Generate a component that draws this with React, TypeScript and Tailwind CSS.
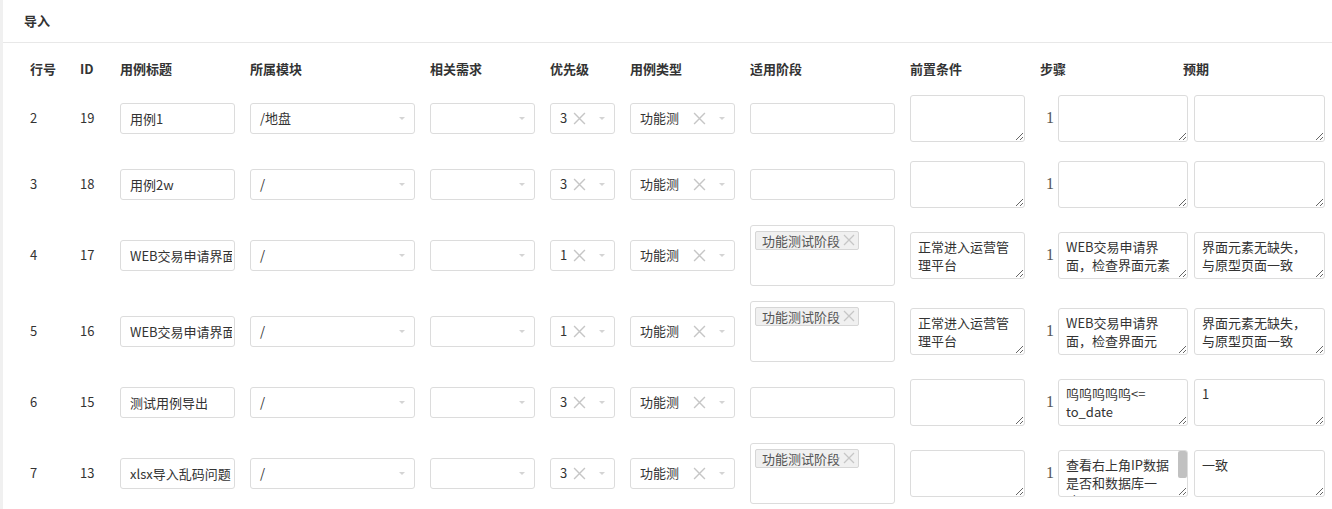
import React from "react";

type Row = {
  no: string;
  id: string;
  title: string;
  module: string;
  pri: string;
  stage: boolean;
  pre: string;
  step: string;
  expect: string;
  scroll?: boolean;
};

const rows: Row[] = [
  { no: "2", id: "19", title: "用例1", module: "/地盘", pri: "3", stage: false, pre: "", step: "", expect: "" },
  { no: "3", id: "18", title: "用例2w", module: "/", pri: "3", stage: false, pre: "", step: "", expect: "" },
  {
    no: "4",
    id: "17",
    title: "WEB交易申请界面",
    module: "/",
    pri: "1",
    stage: true,
    pre: "正常进入运营管理平台",
    step: "WEB交易申请界面，检查界面元素",
    expect: "界面元素无缺失，与原型页面一致",
  },
  {
    no: "5",
    id: "16",
    title: "WEB交易申请界面",
    module: "/",
    pri: "1",
    stage: true,
    pre: "正常进入运营管理平台",
    step: "WEB交易申请界面，检查界面元",
    expect: "界面元素无缺失，与原型页面一致",
  },
  { no: "6", id: "15", title: "测试用例导出", module: "/", pri: "3", stage: false, pre: "", step: "呜呜呜呜呜<= to_date", expect: "1" },
  {
    no: "7",
    id: "13",
    title: "xlsx导入乱码问题",
    module: "/",
    pri: "3",
    stage: true,
    pre: "",
    // line breaks as the scrollbar-narrowed box wraps them
    step: "查看右上角IP数据\n是否和数据库一\n致",
    expect: "一致",
    scroll: true,
  },
];

const heads = ["行号", "ID", "用例标题", "所属模块", "相关需求", "优先级", "用例类型", "适用阶段", "前置条件", "步骤"];

function Cross({ size = 12 }: { size?: number }) {
  return (
    <svg width={size} height={size} viewBox="0 0 12 12" className="shrink-0">
      <path d="M1 1L11 11M11 1L1 11" stroke="#c6c6c6" strokeWidth="1.3" fill="none" />
    </svg>
  );
}

function Caret() {
  return (
    <svg width="6" height="3" viewBox="0 0 6 3" className="shrink-0">
      <polygon points="0,0 6,0 3,3" fill="#d4d4d4" />
    </svg>
  );
}

function Select({ w, text, clear }: { w: string; text?: string; clear?: boolean }) {
  return (
    <div className={`${w} flex h-[31px] items-center rounded-[3px] border border-[#dcdcdc] bg-white pl-[9px] pr-[9px] text-[13px] text-[#333]`}>
      <span className="whitespace-nowrap">{text}</span>
      <span className="flex-1" />
      {clear && (
        <span className="mr-[13px]">
          <Cross size={13} />
        </span>
      )}
      <Caret />
    </div>
  );
}

function Area({ w, value, scroll }: { w: string; value: string; scroll?: boolean }) {
  return (
    <div className="relative">
      <textarea
        readOnly
        value={value}
        className={`${w} block h-[47px] overflow-hidden rounded-[3px] border border-[#dcdcdc] bg-white py-[5px] pl-[7px] text-[13px] leading-[18px] text-[#333] outline-none ${
          scroll ? "pr-[10px]" : "pr-[7px]"
        }`}
      />
      {scroll && <div className="absolute right-[1px] top-[1px] h-[27px] w-[9px] rounded-[2px] bg-[#c1c1c1]" />}
    </div>
  );
}

const grid =
  "grid grid-cols-[50px_40px_130px_180px_120px_80px_120px_160px_130px_154px_1fr] items-center pl-[27px]";

export default function App() {
  return (
    <div
      className="flex h-[509px] w-full overflow-hidden bg-[#f0f0f0] pl-[3px]"
      style={{ fontFamily: '"Noto Sans CJK SC", "Noto Sans", sans-serif' }}
    >
      <div className="flex-1 bg-white">
        <div className="flex h-[43px] items-center border-b border-[#e8e8e8] pl-[21px] text-[13px] font-bold text-[#333]">
          导入
        </div>

        <div className={`${grid} h-[42px] items-start pt-[16px] text-[13px] font-bold leading-[20px] text-[#333]`}>
          {heads.map((h) => (
            <div key={h}>{h}</div>
          ))}
          <div className="-ml-[11px]">预期</div>
        </div>

        {rows.map((r) => (
          <div key={r.no} className={`${grid} ${r.stage ? "h-[76px]" : "h-[66px]"} text-[13px] text-[#333]`}>
            <div>{r.no}</div>
            <div>{r.id}</div>
            <input
              readOnly
              value={r.title}
              className="h-[31px] w-[115px] rounded-[3px] border border-[#dcdcdc] bg-white pl-[9px] pr-[2px] text-[13px] text-[#333] outline-none"
            />
            <Select w="w-[165px]" text={r.module} />
            <Select w="w-[105px]" />
            <Select w="w-[65px]" text={r.pri} clear />
            <Select w="w-[105px]" text="功能测" clear />
            {r.stage ? (
              <div className="h-[61px] w-[145px] rounded-[3px] border border-[#dcdcdc] bg-white pl-[4px] pt-[5px]">
                <span className="inline-flex h-[19px] items-center gap-[3px] rounded-[2px] border border-[#d6d6d6] bg-[#f0f0f0] pl-[6px] pr-[3px] text-[13px] leading-none text-[#555]">
                  功能测试阶段
                  <Cross size={12} />
                </span>
              </div>
            ) : (
              <div className="h-[31px] w-[145px] rounded-[3px] border border-[#dcdcdc] bg-white" />
            )}
            <Area w="w-[115px]" value={r.pre} />
            <div className="flex items-center">
              <span
                className="w-[18px] pl-[6px] text-[16px] leading-none text-[#555]"
                style={{ fontFamily: '"Liberation Serif", serif' }}
              >
                1
              </span>
              <Area w="w-[130px]" value={r.step} scroll={r.scroll} />
            </div>
            <Area w="w-[131px]" value={r.expect} />
          </div>
        ))}
      </div>
    </div>
  );
}
